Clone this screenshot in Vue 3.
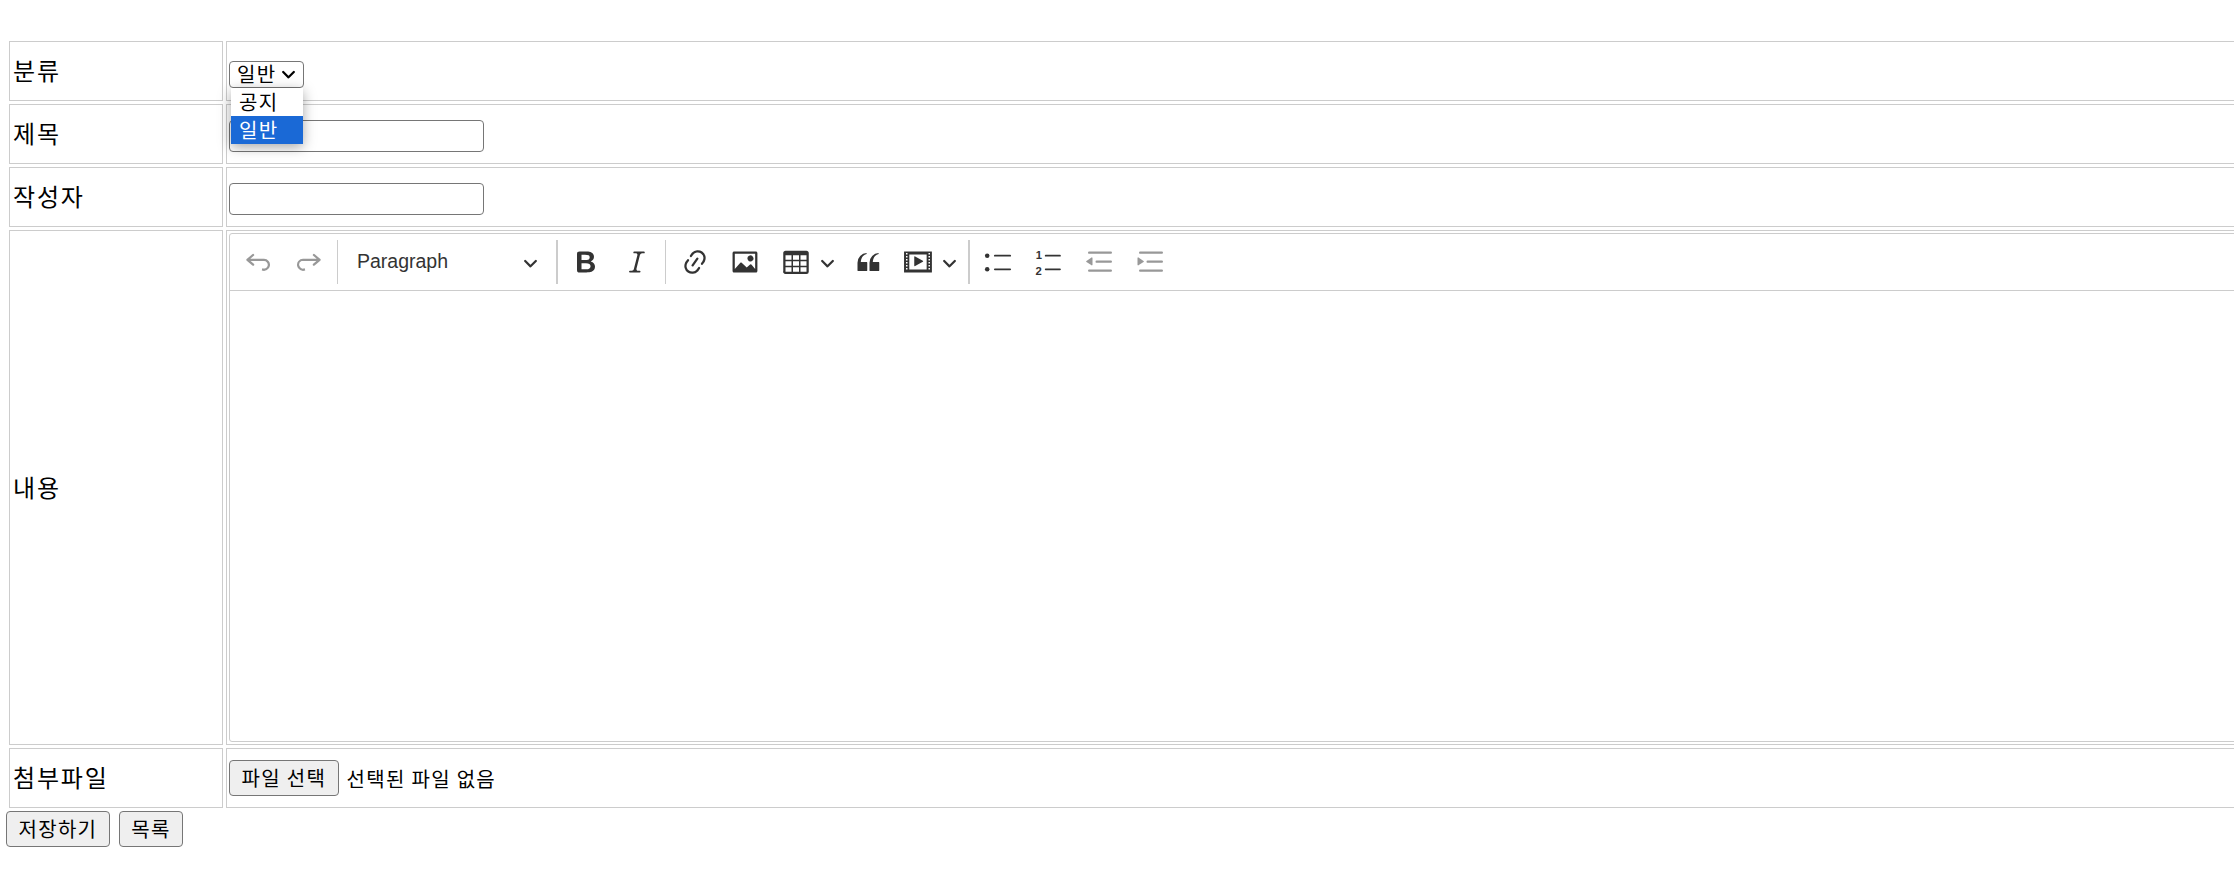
<script setup>
const undoGroup = [
  { name: 'undo', off: true, d: 'M5.042 9.367l2.189 1.837a.75.75 0 0 1-.965 1.149l-3.788-3.18a.747.747 0 0 1-.21-.284.75.75 0 0 1 .17-.945L6.23 4.762a.75.75 0 1 1 .964 1.15L4.863 7.866h8.917A.75.75 0 0 1 14 7.9a4 4 0 1 1-1.477 7.718l.344-1.489a2.5 2.5 0 1 0 1.094-4.73l.008-.032H5.042z' },
  { name: 'redo', off: true, d: 'M14.958 9.367l-2.189 1.837a.75.75 0 0 0 .965 1.149l3.788-3.18a.747.747 0 0 0 .21-.284.75.75 0 0 0-.17-.945L13.77 4.762a.75.75 0 1 0-.964 1.15l2.331 1.955H6.22A.75.75 0 0 0 6 7.9a4 4 0 1 0 1.477 7.718l-.344-1.489A2.5 2.5 0 1 1 5.039 9.4l-.008-.032h9.927z' }
]
const styleGroup = [
  { name: 'bold', d: 'M10.187 17H5.773c-.637 0-1.092-.138-1.364-.415-.273-.277-.409-.718-.409-1.323V4.738c0-.617.14-1.062.419-1.332.279-.27.73-.406 1.354-.406h4.68c.69 0 1.288.041 1.793.124.506.083.96.242 1.36.478.341.197.644.447.906.75a3.262 3.262 0 0 1 .808 2.162c0 1.401-.722 2.426-2.167 3.075C15.05 10.175 16 11.315 16 13.01a3.756 3.756 0 0 1-2.296 3.504 6.1 6.1 0 0 1-1.517.377c-.571.073-1.238.11-2 .11zm-.217-6.217H7v4.087h3.069c1.977 0 2.965-.69 2.965-2.072 0-.707-.256-1.22-.768-1.537-.512-.319-1.277-.478-2.296-.478zM7 5.13v3.619h2.606c.729 0 1.292-.067 1.69-.2a1.6 1.6 0 0 0 .91-.765c.165-.267.247-.566.247-.897 0-.707-.26-1.176-.778-1.409-.519-.232-1.31-.348-2.375-.348H7z' },
  { name: 'italic', d: 'm9.586 14.633.021.004c-.036.335.095.655.393.962.082.083.173.15.274.201h1.474a.6.6 0 1 1 0 1.2H5.304a.6.6 0 0 1 0-1.2h1.15c.474-.07.809-.182 1.005-.334.157-.122.291-.32.404-.597l2.416-9.55a1.053 1.053 0 0 0-.281-.823 1.12 1.12 0 0 0-.442-.296H8.15a.6.6 0 0 1 0-1.2h6.443a.6.6 0 1 1 0 1.2h-1.195c-.376.056-.65.155-.823.296-.215.175-.423.439-.623.79l-2.366 9.347z' }
]
const insertGroup = [
  { name: 'link', cls: 'tight', d: 'm11.077 15 .991-1.416a.75.75 0 1 1 1.229.86l-1.148 1.64a.748.748 0 0 1-.217.206 5.251 5.251 0 0 1-8.503-5.955.741.741 0 0 1 .12-.274l1.147-1.639a.75.75 0 1 1 1.228.86L4.933 10.7l.006.003a3.75 3.75 0 0 0 6.132 4.294l.006.004zm5.494-5.335a.748.748 0 0 1-.12.274l-1.147 1.639a.75.75 0 1 1-1.228-.86l.86-1.23a3.75 3.75 0 0 0-6.144-4.301l-.86 1.229a.75.75 0 0 1-1.229-.86l1.148-1.64a.748.748 0 0 1 .217-.206 5.251 5.251 0 0 1 8.503 5.955zm-4.563-2.532a.75.75 0 0 1 .184 1.045l-3.155 4.505a.75.75 0 1 1-1.229-.86l3.155-4.506a.75.75 0 0 1 1.045-.184z' },
  { name: 'image', d: 'M6.91 10.54c.26-.23.64-.21.88.03l3.36 3.14 2.23-2.06a.64.64 0 0 1 .87 0l2.52 2.97V4.5H3.2v10.12l3.71-4.08zm10.27-7.51c.6 0 1.09.47 1.09 1.05v11.84c0 .59-.49 1.06-1.09 1.06H2.79c-.6 0-1.09-.47-1.09-1.06V4.08c0-.58.49-1.05 1.1-1.05h14.38zm-5.22 5.56a1.96 1.96 0 1 1 3.4-1.96 1.96 1.96 0 0 1-3.4 1.96z' },
  { name: 'table', drop: true, cls: 'wide-pad', d: 'M3 5.5v3h4v-3H3zm0 4v3h4v-3H3zm0 4v3h4v-3H3zm5 3h4v-3H8v3zm5 0h4v-3h-4v3zm4-4v-3h-4v3h4zm0-4v-3h-4v3h4zm1.5 8a1.5 1.5 0 0 1-1.5 1.5H3A1.5 1.5 0 0 1 1.5 16V4c0-.828.672-1.5 1.5-1.5h14c.828 0 1.5.672 1.5 1.5v12zM8 8.5h4v-3H8v3zm0 4h4v-3H8v3z' },
  { name: 'quote', d: 'M3 10.423a6.5 6.5 0 0 1 6.056-6.408l.038.67C6.448 5.423 5.354 7.663 5.22 10H9c.552 0 .5.432.5.986v4.511c0 .554-.448.503-1 .503h-5c-.552 0-.5-.449-.5-1.003v-4.574zm8 0a6.5 6.5 0 0 1 6.056-6.408l.038.67c-2.646.739-3.74 2.979-3.873 5.315H17c.552 0 .5.432.5.986v4.511c0 .554-.448.503-1 .503h-5c-.552 0-.5-.449-.5-1.003v-4.574z' },
  { name: 'media', drop: true, d: 'M18.68 3.03c.6 0 .59-.03.59.55v12.84c0 .59.01.56-.59.56H1.29c-.6 0-.59.03-.59-.56V3.58c0-.58-.01-.55.6-.55h17.38zM15.77 15V5H4.2v10h11.57zM2 4v1h1V4H2zm0 2v1h1V6H2zm0 2v1h1V8H2zm0 2v1h1v-1H2zm0 2v1h1v-1H2zm0 2v1h1v-1H2zm15-10v1h1V4h-1zm0 2v1h1V6h-1zm0 2v1h1V8h-1zm0 2v1h1v-1h-1zm0 2v1h1v-1h-1zm0 2v1h1v-1h-1zM7.5 6.677a.4.4 0 0 1 .593-.351l5.133 2.824a.4.4 0 0 1 0 .7l-5.133 2.824a.4.4 0 0 1-.593-.35V6.676z' }
]
const indentGroup = [
  { name: 'outdent', off: true, d: 'M2 3.75c0 .414.336.75.75.75h14.5a.75.75 0 1 0 0-1.5H2.75a.75.75 0 0 0-.75.75zm5 6c0 .414.336.75.75.75h9.5a.75.75 0 1 0 0-1.5h-9.5a.75.75 0 0 0-.75.75zM2.75 16.5h14.5a.75.75 0 1 0 0-1.5H2.75a.75.75 0 1 0 0 1.5zm1.618-9.55L.98 9.358a.4.4 0 0 0 .013.661l3.39 2.207A.4.4 0 0 0 5 11.892V7.275a.4.4 0 0 0-.632-.326z' },
  { name: 'indent', off: true, d: 'M2 3.75c0 .414.336.75.75.75h14.5a.75.75 0 1 0 0-1.5H2.75a.75.75 0 0 0-.75.75zm5 6c0 .414.336.75.75.75h9.5a.75.75 0 1 0 0-1.5h-9.5a.75.75 0 0 0-.75.75zM2.75 16.5h14.5a.75.75 0 1 0 0-1.5H2.75a.75.75 0 1 0 0 1.5zM1.632 6.95 5.02 9.358a.4.4 0 0 1-.013.661l-3.39 2.207A.4.4 0 0 1 1 11.892V7.275a.4.4 0 0 1 .632-.326z' }
]
const chevron = 'M.941 4.523a.75.75 0 1 1 1.06-1.06l3.006 3.005 3.005-3.005a.75.75 0 1 1 1.06 1.06l-3.549 3.55a.75.75 0 0 1-1.168-.136L.941 4.523z'
</script>

<template>
  <div class="page">
    <table class="form-table">
      <tbody>
        <tr>
          <td class="label">분류</td>
          <td>
            <div class="field select-field">
              <span class="select">일반<svg class="select-arrow" viewBox="0 0 10 10"><path :d="chevron" /></svg></span>
              <ul class="options">
                <li>공지</li>
                <li class="selected">일반</li>
              </ul>
            </div>
          </td>
        </tr>
        <tr>
          <td class="label">제목</td>
          <td><div class="field input-field"><input type="text" /></div></td>
        </tr>
        <tr>
          <td class="label">작성자</td>
          <td><div class="field input-field"><input type="text" /></div></td>
        </tr>
        <tr>
          <td class="label">내용</td>
          <td class="editor-cell">
            <div class="editor">
              <div class="toolbar">
                <button v-for="b in undoGroup" :key="b.name" class="tool narrow" :class="{ off: b.off }">
                  <svg viewBox="0 0 20 20"><path :d="b.d" /></svg>
                </button>
                <i class="sep"></i>
                <div class="heading">
                  <span>Paragraph</span>
                  <svg viewBox="0 0 10 10"><path :d="chevron" /></svg>
                </div>
                <i class="sep thick"></i>
                <button v-for="b in styleGroup" :key="b.name" class="tool">
                  <svg viewBox="0 0 20 20"><path :d="b.d" /></svg>
                </button>
                <i class="sep"></i>
                <button v-for="b in insertGroup" :key="b.name" class="tool" :class="[b.cls, { drop: b.drop }]">
                  <svg viewBox="0 0 20 20"><path :d="b.d" /></svg>
                  <svg v-if="b.drop" class="chev" viewBox="0 0 10 10"><path :d="chevron" /></svg>
                </button>
                <i class="sep thick"></i>
                <button class="tool">
                  <svg viewBox="0 0 20 20">
                    <circle cx="2.8" cy="5.8" r="1.5" />
                    <circle cx="2.8" cy="14.9" r="1.5" />
                    <rect x="7.3" y="5.2" width="11.4" height="1.2" rx=".6" />
                    <rect x="7.3" y="14.3" width="11.4" height="1.2" rx=".6" />
                  </svg>
                </button>
                <button class="tool">
                  <svg viewBox="0 0 20 20">
                    <text x="1.2" y="8.2" class="digit">1</text>
                    <text x="1" y="18.6" class="digit">2</text>
                    <rect x="7.2" y="5.2" width="10.7" height="1.2" rx=".6" />
                    <rect x="7.2" y="14.3" width="10.7" height="1.2" rx=".6" />
                  </svg>
                </button>
                <button v-for="b in indentGroup" :key="b.name" class="tool off">
                  <svg viewBox="0 0 20 20"><path :d="b.d" /></svg>
                </button>
              </div>
              <div class="editable"></div>
            </div>
          </td>
        </tr>
        <tr>
          <td class="label">첨부파일</td>
          <td>
            <div class="field file-field">
              <button class="btn">파일 선택</button>
              <span>선택된 파일 없음</span>
            </div>
          </td>
        </tr>
      </tbody>
    </table>
    <div class="actions">
      <button class="btn">저장하기</button>
      <button class="btn">목록</button>
    </div>
  </div>
</template>

<style>
html, body {
  margin: 0;
  overflow: hidden;
  background: #fff;
}
</style>

<style scoped>
.page {
  width: 2234px;
  height: 878px;
  overflow: hidden;
  padding: 38px 0 0 6px;
  box-sizing: border-box;
  font-family: "Liberation Sans", "Noto Sans CJK KR", sans-serif;
  color: #000;
}

.form-table {
  width: 2400px;
  table-layout: fixed;
  border-collapse: separate;
  border-spacing: 3px;
}

.form-table td {
  border: 1px solid #ccc;
  padding: 2px;
  height: 60px;
  box-sizing: border-box;
  vertical-align: middle;
}

.form-table td.label {
  width: 214px;
  padding: 0 0 2px 3px;
  font-size: 24px;
  line-height: 30px;
  letter-spacing: 1.8px;
  font-family: "Noto Sans CJK KR", sans-serif;
}

.field {
  display: flex;
  align-items: center;
  font-size: 20px;
  letter-spacing: 1.3px;
  font-family: "Noto Sans CJK KR", sans-serif;
}

.select-field {
  position: relative;
  padding-top: 7px;
}

.input-field {
  padding-top: 3px;
}

.select {
  display: flex;
  align-items: center;
  box-sizing: border-box;
  width: 75px;
  height: 27px;
  padding: 0 0 2px 7px;
  border: 1px solid #767676;
  border-radius: 4px;
  line-height: 22px;
  background: #fff;
}

.select-arrow {
  width: 15px;
  height: 15px;
  margin-left: 5px;
  flex: none;
}

.options {
  position: absolute;
  left: 2px;
  top: 34px;
  width: 72px;
  margin: 0;
  padding: 0;
  list-style: none;
  background: #fff;
  box-shadow: 0 3px 12px rgba(0, 0, 0, 0.35);
  z-index: 2;
}

.options li {
  height: 28px;
  line-height: 28px;
  padding-left: 8px;
}

.options li.selected {
  background: #1a69d6;
  color: #fff;
}

input[type="text"] {
  display: block;
  box-sizing: border-box;
  width: 255px;
  height: 32px;
  padding: 0;
  border: 1px solid #767676;
  border-radius: 4px;
  background: #fff;
}

.file-field {
  gap: 8px;
}

.btn {
  height: 36px;
  padding: 0 11.5px;
  border: 1px solid #767676;
  border-radius: 4px;
  background: #efefef;
  font-family: "Noto Sans CJK KR", sans-serif;
  font-size: 20px;
  line-height: 30px;
  letter-spacing: 1.3px;
  color: #000;
}

.actions {
  display: flex;
  gap: 9px;
}

.editor-cell .editor {
  display: flex;
  flex-direction: column;
  box-sizing: border-box;
  height: 509px;
  border: 1px solid #ccc;
  border-radius: 3px;
}

.toolbar {
  display: flex;
  align-items: center;
  height: 56px;
  flex: none;
  padding-left: 3px;
  border-bottom: 1px solid #ccc;
  color: #333;
}

.tool {
  display: flex;
  align-items: center;
  justify-content: center;
  flex: none;
  width: 51px;
  height: 44px;
  padding: 0;
  border: 0;
  background: none;
  color: inherit;
}

.tool.narrow {
  width: 50.5px;
}

.tool.tight {
  width: 50px;
  padding-left: 2px;
}

.tool.drop {
  width: 72px;
  justify-content: flex-start;
  padding-left: 10px;
}

.tool.drop.wide-pad {
  padding-left: 11px;
}

.tool svg {
  width: 30px;
  height: 30px;
  fill: currentColor;
}

.tool.off svg {
  opacity: 0.5;
}

.tool .chev {
  width: 15px;
  height: 15px;
  margin-left: 9px;
}

.digit {
  font-family: "Liberation Sans", sans-serif;
  font-size: 7.5px;
  font-weight: 700;
}

.sep {
  flex: none;
  width: 1px;
  height: 44px;
  margin: 0 3px;
  background: #ccc;
}

.sep.thick {
  width: 2px;
  margin: 0 2px 0 3px;
}

.heading {
  display: flex;
  align-items: center;
  justify-content: space-between;
  flex: none;
  box-sizing: border-box;
  width: 212px;
  padding: 0 15px 0 16px;
  font-family: "Liberation Sans", sans-serif;
  font-size: 19.5px;
}

.heading span {
  margin-top: -2px;
}

.heading svg {
  width: 15px;
  height: 15px;
  fill: currentColor;
}

.editable {
  flex: 1;
}
</style>
